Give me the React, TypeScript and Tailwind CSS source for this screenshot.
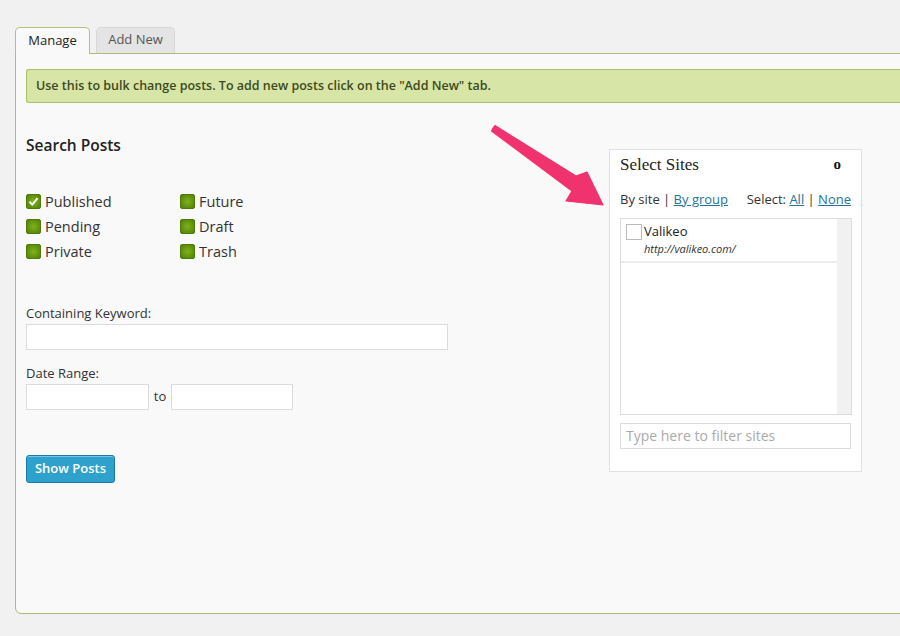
import React from "react";

const STATUSES: [string, boolean][][] = [
  [
    ["Published", true],
    ["Pending", false],
    ["Private", false],
  ],
  [
    ["Future", false],
    ["Draft", false],
    ["Trash", false],
  ],
];

function GreenBox({ checked }: { checked: boolean }) {
  return (
    <span className="flex h-[15px] w-[15px] shrink-0 items-center justify-center rounded-[2px] border border-[#4f7a0a] bg-[radial-gradient(circle,#7fb21a_0%,#5f8f0c_70%,#527e08_100%)]">
      {checked && (
        <svg width="11" height="11" viewBox="0 0 11 11">
          <path d="M1.5 5.8 L4.3 8.6 L9.6 2.2" fill="none" stroke="#ffffff" strokeWidth="2" />
        </svg>
      )}
    </span>
  );
}

function Arrow() {
  return (
    <svg className="absolute left-[488px] top-[122px]" width="122" height="90" viewBox="0 0 122 90">
      <path
        d="M5 6 L7 3.5 L88 54 L99 50 L115 83 L78 79 L84 69 L3.5 9 Z"
        fill="#f0336f"
        stroke="#f0336f"
        strokeWidth="1.2"
        strokeLinejoin="round"
      />
    </svg>
  );
}

export default function App() {
  return (
    <div className="relative h-[636px] w-[900px] overflow-hidden bg-[#f1f1f1] font-['Open_Sans',sans-serif] text-[#333]">
      <div className="pl-[15px] pt-[27px]">
        {/* tab strip */}
        <div className="flex items-end gap-[6px]">
          <div className="relative z-10 -mb-px flex h-[27px] w-[75px] items-center justify-center rounded-t-[5px] border border-b-0 border-[#b3c27a] bg-[#f9f9f9] pb-px text-[13px] text-[#222]">
            Manage
          </div>
          <div className="flex h-[26px] w-[79px] items-center justify-center rounded-t-[5px] border border-b-0 border-[#d7d7d7] bg-[#e4e4e4] pb-px text-[13px] text-[#555]">
            Add New
          </div>
        </div>

        {/* main panel */}
        <div className="relative h-[561px] w-[900px] rounded-bl-[6px] border border-[#aeba78] bg-[#f9f9f9] pl-[10px] pt-[15px]">
          <div className="flex h-[34px] items-center rounded-l-[3px] border border-r-0 border-[#a9bf69] bg-[#d7e5a7] pl-[9px] text-[12.5px] font-semibold text-[#3d4a20]">
            Use this to bulk change posts. To add new posts click on the "Add New" tab.
          </div>

          <div className="flex">
            {/* search form */}
            <div className="w-[583px]">
              <h2 className="mt-[31px] text-[15.5px] font-semibold leading-[22px] text-[#222]">Search Posts</h2>

              <div className="mt-[33px] flex">
                {STATUSES.map((col, ci) => (
                  <div key={ci} className={ci === 0 ? "w-[154px]" : ""}>
                    {col.map(([label, checked]) => (
                      <div key={label} className="flex h-[25px] items-center gap-[4px] text-[14.5px] text-[#333]">
                        <GreenBox checked={checked} />
                        <span>{label}</span>
                      </div>
                    ))}
                  </div>
                ))}
              </div>

              <div className="mt-[40px] text-[13px] leading-[18px] text-[#333]">Containing Keyword:</div>
              <input className="mt-[2px] block h-[26px] w-[422px] border border-[#dcdcdc] bg-white" />

              <div className="mt-[14px] text-[13px] leading-[18px] text-[#333]">Date Range:</div>
              <div className="mt-[2px] flex items-center">
                <input className="block h-[26px] w-[123px] border border-[#dcdcdc] bg-white" />
                <span className="w-[22px] text-center text-[13px] text-[#333]">to</span>
                <input className="block h-[26px] w-[122px] border border-[#dcdcdc] bg-white" />
              </div>

              <button className="mt-[45px] h-[28px] w-[89px] rounded-[3px] border border-[#1b7aa6] bg-[#2ea2cc] text-[13px] font-semibold text-white shadow-[inset_0_1px_0_#78c8e6]">
                Show Posts
              </button>
            </div>

            {/* site selector */}
            <div className="mt-[46px] h-[323px] w-[253px] border border-[#e2e2e2] bg-white px-[10px]">
              <div className="flex h-[28px] items-center justify-between pr-[10px] pt-[1px]">
                <span className="font-['Liberation_Serif',serif] text-[17px] text-[#222]">Select Sites</span>
                <span className="font-['Liberation_Serif',serif] text-[15px] font-bold leading-none text-[#111]">o</span>
              </div>
              <div className="mt-[12px] flex items-center justify-between text-[13px] text-[#333]">
                <span>
                  By site | <span className="text-[#21759b] underline">By group</span>
                </span>
                <span>
                  Select: <span className="text-[#21759b] underline">All</span> |{" "}
                  <span className="text-[#21759b] underline">None</span>
                </span>
              </div>
              <div className="mt-[8px] flex h-[197px] w-[232px] border border-[#dcdcdc] bg-white">
                <div className="flex-1">
                  <div className="flex h-[44px] border-b-2 border-[#ececec] pl-[5px] pt-[5px]">
                    <span className="mr-[2px] h-[16px] w-[16px] border border-[#bbb] bg-white" />
                    <div>
                      <div className="text-[13px] leading-[15px] text-[#222]">Valikeo</div>
                      <div className="mt-[3px] text-[11px] italic leading-[13px] text-[#333]">http://valikeo.com/</div>
                    </div>
                  </div>
                </div>
                <div className="w-[14px] bg-[#f1f1f1]" />
              </div>
              <div className="mt-[8px] flex h-[26px] w-[231px] items-center border border-[#dcdcdc] bg-white pl-[5px] text-[14px] text-[#aaa]">
                Type here to filter sites
              </div>
            </div>
          </div>
        </div>
      </div>
      <Arrow />
    </div>
  );
}
